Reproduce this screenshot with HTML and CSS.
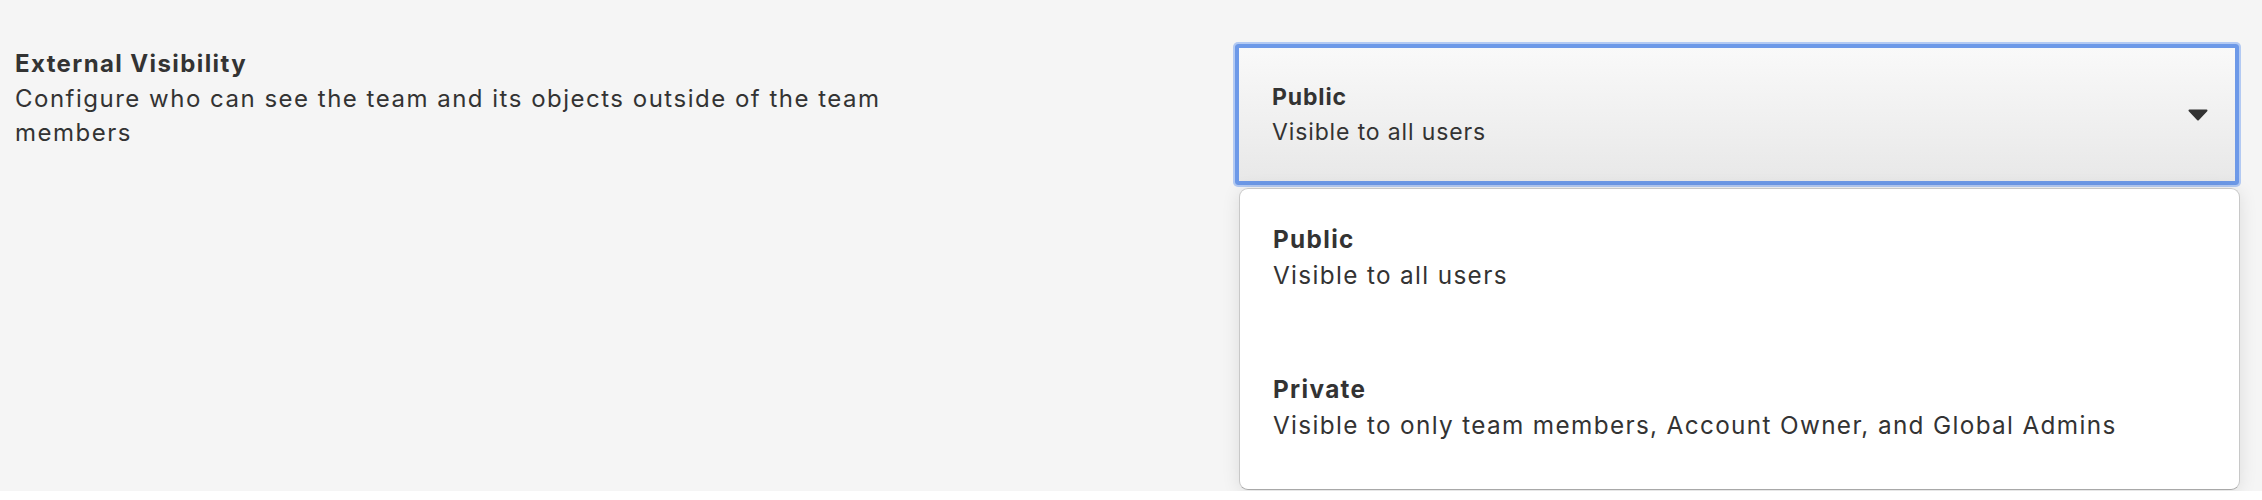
FILE: index.html
```html
<!doctype html>
<html>
  <head>
    <title>Team Settings</title>
    <link rel="stylesheet" href="styles.css">
  </head>
  <body>
    <div class="page">
      <div class="settingRow">
        <div class="settingInfo">
          <div class="settingTitle">External Visibility</div>
          <div class="settingDesc">Configure who can see the team and its objects outside of the team members</div>
        </div>
        <div class="field">
          <div class="select">
            <div class="option">
              <div class="optionTitle">Public</div>
              <div class="optionDesc">Visible to all users</div>
            </div>
            <svg class="caret" width="20" height="12" viewBox="0 0 20 12">
              <path d="M1.5 1.5h17l-8.5 9z" fill="#333" stroke="#333" stroke-width="2" stroke-linejoin="round"/>
            </svg>
          </div>
          <div class="menu">
            <div class="menuItem">
              <div class="optionTitle">Public</div>
              <div class="optionDesc">Visible to all users</div>
            </div>
            <div class="menuItem">
              <div class="optionTitle">Private</div>
              <div class="optionDesc">Visible to only team members, Account Owner, and Global Admins</div>
            </div>
          </div>
        </div>
      </div>
    </div>
  </body>
</html>
```

FILE: styles.css
```css
html, body {
  margin: 0;
  padding: 0;
}

body {
  background: #fff;
  font-family: Inter, "Noto Sans", sans-serif;
  font-size: 24px;
  letter-spacing: 1.2px;
  color: #333;
}

.page {
  background: #f5f5f5;
  min-height: 491px;
  box-sizing: border-box;
  padding: 44px 23px 0 15px;
}

.settingRow {
  display: flex;
  justify-content: space-between;
  align-items: flex-start;
}

.settingInfo {
  width: 900px;
  margin-top: 3px;
  line-height: 34px;
}

.settingTitle {
  font-weight: 700;
  letter-spacing: 1.4px;
}

.settingDesc {
  margin-top: 1px;
  letter-spacing: 1.5px;
}

.field {
  position: relative;
  width: 1004px;
}

.select {
  display: flex;
  align-items: center;
  justify-content: space-between;
  height: 141px;
  box-sizing: border-box;
  border: 4px solid #6d99e8;
  border-radius: 3px;
  box-shadow: 0 0 0 2px #b3caf3;
  background: linear-gradient(#f9f9f9, #e8e8e8);
  padding: 0 27px 0 33px;
}

.option {
  font-size: 23px;
  letter-spacing: 0.87px;
  line-height: 35px;
}

.optionTitle {
  font-weight: 700;
}

.caret {
  display: block;
}

.menu {
  position: absolute;
  top: calc(100% + 3px);
  left: 4px;
  right: -1px;
  background: #fff;
  border: 1px solid #c8c8c8;
  border-bottom-color: #a8a8a8;
  border-radius: 9px;
  box-shadow: 0 2px 18px rgba(0, 0, 0, 0.1);
}

.menuItem {
  font-size: 24.3px;
  letter-spacing: 1.35px;
  line-height: 36px;
  padding: 32px 33px 46px;
}
```
